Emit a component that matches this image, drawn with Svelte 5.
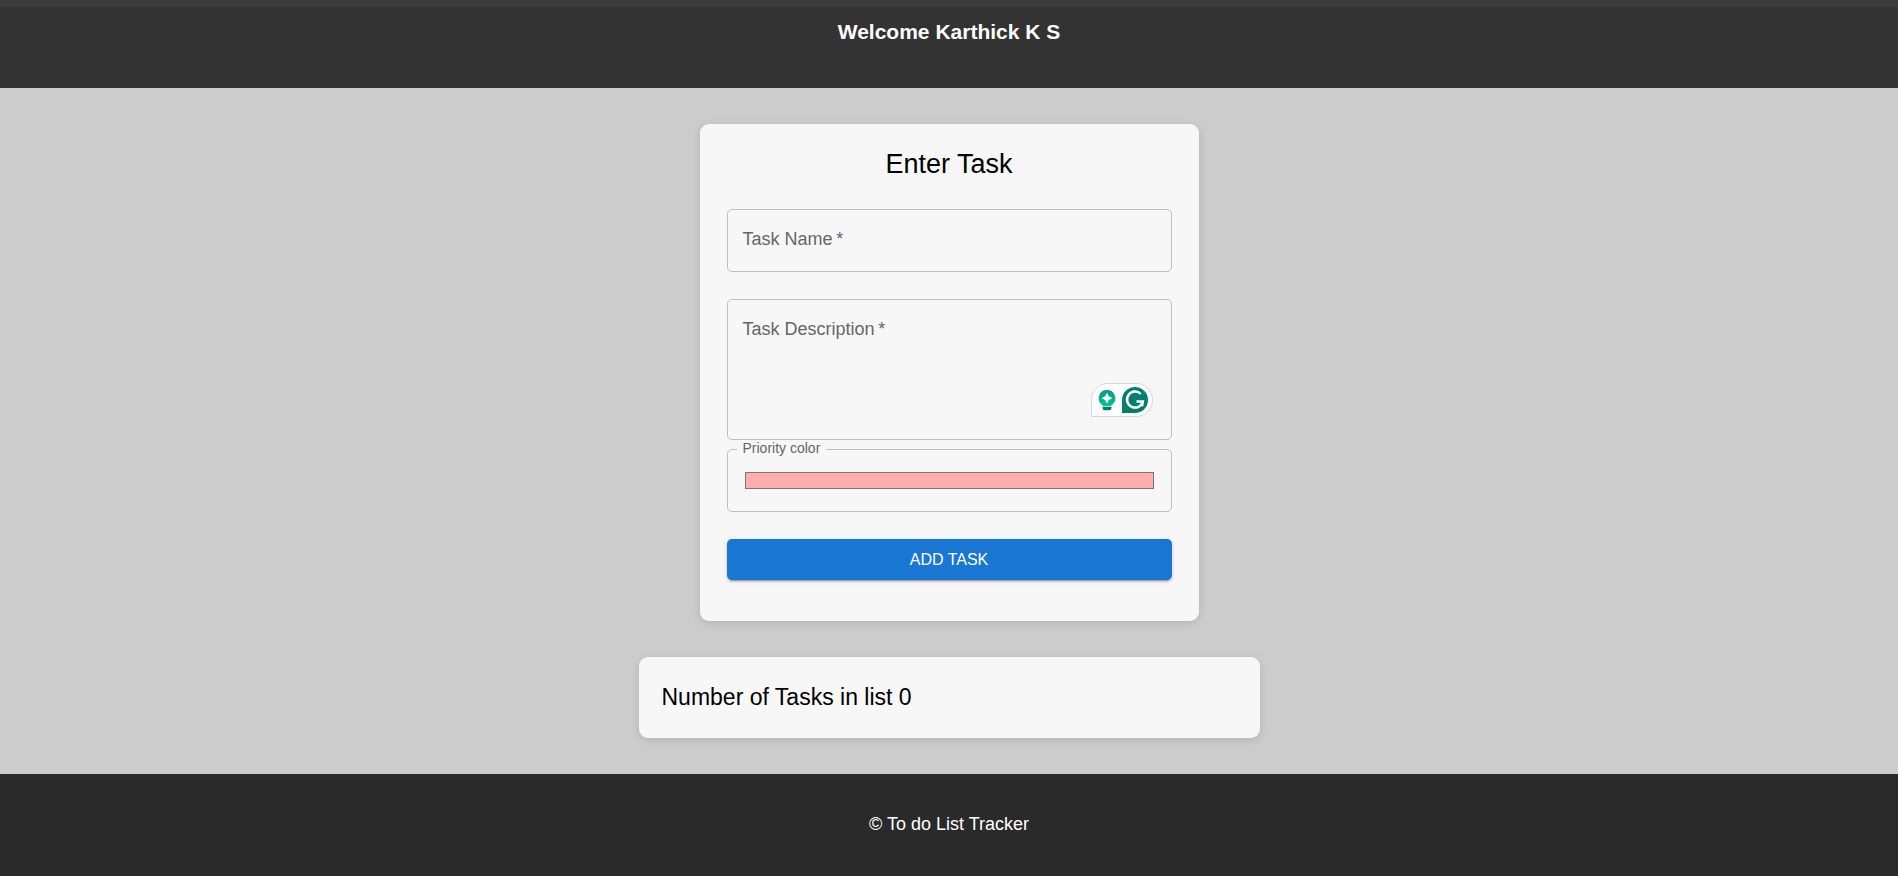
<script>
  let name = $state('');
  let description = $state('');
  let color = $state('#ffadad');
  let tasks = $state([]);

  function addTask(event) {
    event.preventDefault();
    tasks.push({ name, description, color });
    name = '';
    description = '';
  }
</script>

<div class="page">
  <header><h1>Welcome Karthick K S</h1></header>

  <main>
    <form class="card entry" onsubmit={addTask}>
      <h2>Enter Task</h2>
      <div class="field">
        <input id="task-name" type="text" required bind:value={name} />
        <label for="task-name" class:float={name}>Task Name&thinsp;*</label>
      </div>
      <div class="field">
        <textarea id="task-description" required bind:value={description}></textarea>
        <label for="task-description" class:float={description}>Task Description&thinsp;*</label>
        <div class="assistant">
          <svg width="18" height="22" viewBox="0 0 18 22" aria-hidden="true">
            <defs>
              <linearGradient id="bulb" x1="0" y1="0" x2="0" y2="1">
                <stop offset="0" stop-color="#079a84" />
                <stop offset="1" stop-color="#04c39a" />
              </linearGradient>
            </defs>
            <path d="M9 1a8.300 8.300 0 0 0-5.300 14.700c.7.5 1.100.7 1.300 1.300h8c.2-.6.600-.8 1.300-1.300A8.300 8.300 0 0 0 9 1z" fill="url(#bulb)" />
            <path d="M9 4.300c.500 0 .7.400.8.800.600 2 1.300 2.700 3.300 3.300.4.100.8.300.8.800s-.4.700-.8.800c-2 .600-2.700 1.300-3.300 3.300-.1.400-.3.800-.8.800s-.7-.4-.8-.8c-.600-2-1.300-2.700-3.300-3.300-.4-.1-.8-.3-.8-.8s.4-.7.8-.8c2-.600 2.700-1.300 3.300-3.300.1-.4.3-.8.8-.8z" fill="#fff" />
            <path d="M4.500 17.800h9v1.200A2.200 2.200 0 0 1 11.300 21.200H6.700A2.200 2.200 0 0 1 4.500 19z" fill="#027e6f" />
          </svg>
          <svg width="26" height="26" viewBox="0 0 26 26" aria-hidden="true">
            <path d="M0 26V13a13 13 0 1 1 13 13z" fill="#027e6f" />
            <path d="M18.800 7A8 8 0 1 0 20.800 14.500H14.500" fill="none" stroke="#fff" stroke-width="2.500" />
            <path d="M17.500 18.500h3.200v-4" fill="none" stroke="#fff" stroke-width="1.600" />
          </svg>
        </div>
      </div>
      <div class="field color">
        <input id="priority" type="color" bind:value={color} />
        <label for="priority" class="float">Priority color</label>
      </div>
      <button type="submit">ADD TASK</button>
    </form>

    <section class="card list">
      <h3>Number of Tasks in list {tasks.length}</h3>
    </section>
  </main>

  <footer><p>© To do List Tracker</p></footer>
</div>

<style>
  :global(body) { margin: 0; }
  .page {
    display: flex;
    flex-direction: column;
    min-height: 100vh;
    background: #ccc;
    color: #000;
    font: 18px/27px "Liberation Sans", Arial, sans-serif;
  }
  .page * { box-sizing: border-box; }
  h1, h2, h3, p { margin: 0; }
  header {
    padding: 11px 18px 43px;
    border-top: 7px solid #3b3b3b;
    background: #333;
    color: #fff;
    text-align: center;
  }
  h1 { font-size: 21px; line-height: 27px; }
  main {
    flex: 1;
    display: flex;
    flex-direction: column;
    align-items: center;
    gap: 36px;
    padding: 36px 18px;
  }
  .card {
    width: 100%;
    border-radius: 9px;
    background: #f7f7f7;
    box-shadow: 0 2px 9px rgba(0, 0, 0, 0.12);
  }
  .entry {
    display: flex;
    flex-direction: column;
    max-width: 499px;
    padding: 22px 27px 41px;
  }
  h2 {
    margin-bottom: 27px;
    font-size: 27px;
    font-weight: 400;
    line-height: 36px;
    text-align: center;
  }
  .field {
    position: relative;
    display: flex;
    margin-bottom: 27px;
    border: 1px solid #bebebe;
    border-radius: 5px;
  }
  .field input, .field textarea {
    flex: 1;
    min-width: 0;
    height: 61px;
    padding: 18px 16px;
    border: 0;
    outline: 0;
    background: transparent;
    color: inherit;
    font: inherit;
    resize: none;
  }
  .field textarea { height: 139px; }
  .field:has(textarea) { margin-bottom: 9px; }
  label {
    position: absolute;
    top: 16px;
    left: 15px;
    color: #666;
    pointer-events: none;
  }
  label.float {
    top: -10px;
    left: 9px;
    padding: 0 6px;
    background: #f7f7f7;
    font-size: 14px;
    line-height: 16px;
  }
  .color input { padding: 22px 17px; }
  .color input::-webkit-color-swatch-wrapper { padding: 0; }
  .color input::-webkit-color-swatch {
    border: 1px solid #777;
    border-radius: 0;
  }
  .assistant {
    position: absolute;
    right: 18px;
    bottom: 22px;
    display: flex;
    align-items: center;
    gap: 6px;
    height: 34px;
    padding: 0 4px 0 6px;
    border: 1px solid #d5d6e2;
    border-radius: 17px 17px 17px 0;
    background: #fff;
  }
  button {
    height: 41px;
    border: 0;
    border-radius: 5px;
    background: #1976d2;
    box-shadow: 0 3px 1px -2px rgba(0, 0, 0, 0.2), 0 2px 2px rgba(0, 0, 0, 0.14), 0 1px 5px rgba(0, 0, 0, 0.12);
    color: #fff;
    font: 16px/27px "Liberation Sans", Arial, sans-serif;
    cursor: pointer;
  }
  .list {
    max-width: 621px;
    padding: 27px 23px;
  }
  h3 { font-size: 23px; font-weight: 400; line-height: 27px; }
  footer {
    padding: 37px 18px 38px;
    background: #2a2a2a;
    color: #fff;
    text-align: center;
  }
</style>
